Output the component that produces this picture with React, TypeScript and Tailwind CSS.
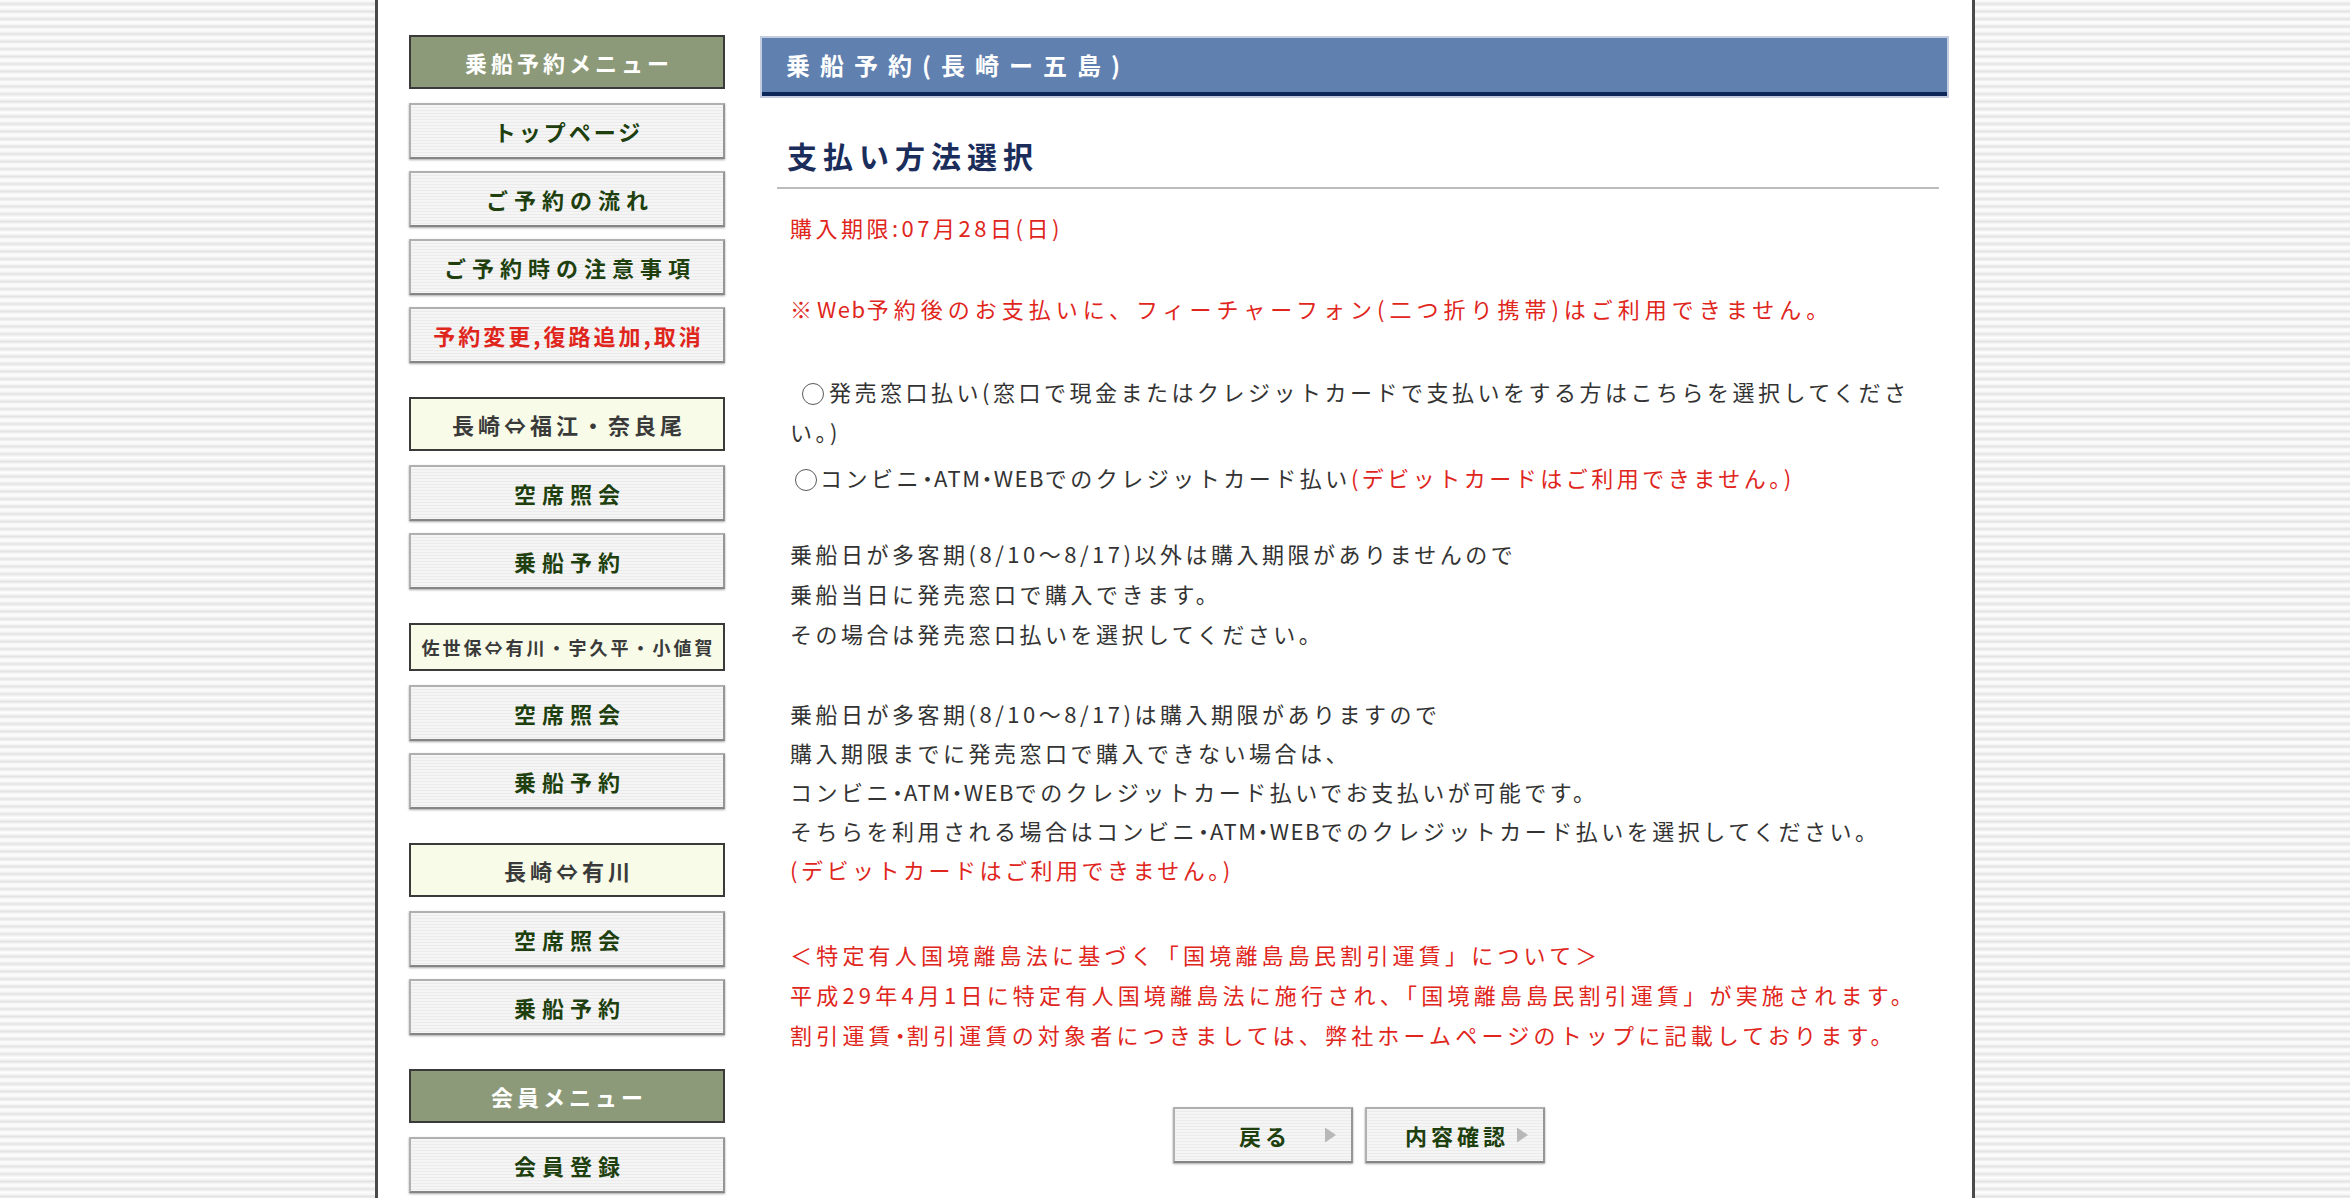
import React from 'react';

const jp = "font-['Noto_Sans_CJK_JP','Noto_Sans',sans-serif]";

const grayBtn =
  'relative flex h-[56px] items-center justify-center border-2 border-[#b0b0b0] border-b-[#858585] border-r-[#969696] bg-[repeating-linear-gradient(to_bottom,#f5f5f5_0px,#f5f5f5_2px,#ebebeb_2px,#ebebeb_3px)] shadow-[0_1px_2px_rgba(0,0,0,0.35)] font-bold text-[#203f0e]';

// half-width nakaguro, like the original page renders it
const Dot = () => <span className="tracking-[1px] [font-feature-settings:'halt']">・</span>;
const Latin = ({ children }: { children: React.ReactNode }) => <span className="tracking-[1.5px]">{children}</span>;

function MenuHead({ label, className = '' }: { label: string; className?: string }) {
  return (
    <div
      className={`flex h-[54px] w-[316px] items-center justify-center border-2 border-[#3a3a3a] bg-[#8d9a79] pl-[4px] text-[22px] font-bold tracking-[4px] text-white ${className}`}
    >
      {label}
    </div>
  );
}

function MenuButton({
  label,
  red,
  tight,
  className = '',
}: {
  label: string;
  red?: boolean;
  tight?: boolean;
  className?: string;
}) {
  let look = 'pl-[6px] tracking-[6px]';
  if (red) look = 'pl-[3px] tracking-[3px] text-[#e0261c]';
  else if (tight) look = 'pl-[3px] tracking-[3px]';
  return <div className={`${grayBtn} w-[316px] text-[22px] ${look} ${className}`}>{label}</div>;
}

function RouteLabel({ label, small, className = '' }: { label: string; small?: boolean; className?: string }) {
  return (
    <div
      className={`flex w-[316px] items-center justify-center border-2 border-[#3a3a3a] bg-[#f7fbe8] font-bold text-[#3a3a3a] ${
        small ? 'h-[48px] pl-[3px] text-[18px] tracking-[3px]' : 'h-[54px] pl-[4px] text-[22px] tracking-[4px]'
      } ${className}`}
    >
      {label}
    </div>
  );
}

function Radio({ className = '' }: { className?: string }) {
  return (
    <span
      className={`inline-block h-[22px] w-[22px] rounded-full border-[1.5px] border-[#5a5a5a] bg-white align-[-4px] ${className}`}
    />
  );
}

function ActionButton({ label }: { label: string }) {
  return (
    <div className={`${grayBtn} w-[180px] pl-[4px] text-[22px] tracking-[4px]`}>
      {label}
      <svg
        className="absolute right-[15px] top-1/2 -translate-y-1/2"
        width="11"
        height="15"
        viewBox="0 0 11 15"
      >
        <path d="M0 0 L11 7.5 L0 15 Z" fill="#b8b8b8" />
      </svg>
    </div>
  );
}

export default function App() {
  return (
    <div
      className={`min-h-screen bg-[repeating-linear-gradient(to_bottom,#fdfdfd_0px,#f5f5f5_2px,#e3e3e3_4px,#f5f5f5_6px,#fdfdfd_7.5px)] ${jp}`}
    >
      <div className="mx-auto flex min-h-screen w-[1600px] border-x-[3px] border-[#4a4a4a] bg-white pl-[31px] pr-[23px] pt-[35px]">
        {/* sidebar */}
        <div className="flex w-[316px] shrink-0 flex-col">
          <MenuHead label="乗船予約メニュー" />
          <MenuButton label="トップページ" tight className="mt-[14px]" />
          <MenuButton label="ご予約の流れ" className="mt-[12px]" />
          <MenuButton label="ご予約時の注意事項" className="mt-[12px]" />
          <MenuButton label="予約変更,復路追加,取消" red className="mt-[12px]" />

          <RouteLabel label="長崎⇔福江・奈良尾" className="mt-[34px]" />
          <MenuButton label="空席照会" className="mt-[14px]" />
          <MenuButton label="乗船予約" className="mt-[12px]" />

          <RouteLabel label="佐世保⇔有川・宇久平・小値賀" small className="mt-[34px]" />
          <MenuButton label="空席照会" className="mt-[14px]" />
          <MenuButton label="乗船予約" className="mt-[12px]" />

          <RouteLabel label="長崎⇔有川" className="mt-[34px]" />
          <MenuButton label="空席照会" className="mt-[14px]" />
          <MenuButton label="乗船予約" className="mt-[12px]" />

          <MenuHead label="会員メニュー" className="mt-[34px]" />
          <MenuButton label="会員登録" className="mt-[14px]" />
        </div>

        {/* main */}
        <div className="ml-[35px] flex-1">
          <div className="mt-[1px] h-[62px] border-2 border-[#c4cce0] bg-[#6080b0]">
            <div className="flex h-full items-center border-b-[4px] border-[#0d2858] pl-[24px] text-[24px] font-bold tracking-[10px] text-white">
              乗船予約(長崎ー五島)
            </div>
          </div>

          <h2 className="ml-[17px] mr-[10px] mt-[35px] border-b-2 border-[#bcbcbc] pb-[9px] pl-[10px] text-[30px] font-bold leading-[45px] tracking-[6px] text-[#1b2d5b]">
            支払い方法選択
          </h2>

          <div className="mt-[18px] whitespace-nowrap pl-[30px] pr-[10px] text-[22px] leading-[40px] tracking-[3.5px] text-[#333]">
            <p className="text-[#e0261c]">購入期限:07月28日(日)</p>

            <p className="mt-[41px] tracking-[5px] text-[#e0261c]">
              ※<Latin>Web</Latin>予約後のお支払いに、フィーチャーフォン(二つ折り携帯)はご利用できません。
            </p>

            <p className="mt-[43px]">
              <Radio className="ml-[12px] mr-[5px]" />
              発売窓口払い(窓口で現金またはクレジットカードで支払いをする方はこちらを選択してくださ
              <br />
              い。)
            </p>
            <p className="mt-[6px]">
              <Radio className="ml-[5px] mr-[3px]" />
              コンビニ<Dot /><Latin>ATM</Latin><Dot /><Latin>WEB</Latin>でのクレジットカード払い
              <span className="text-[#e0261c]">(デビットカードはご利用できません。)</span>
            </p>

            <p className="mt-[36px]">
              乗船日が多客期(8/10〜8/17)以外は購入期限がありませんので
              <br />
              乗船当日に発売窓口で購入できます。
              <br />
              その場合は発売窓口払いを選択してください。
            </p>

            <p className="mt-[41px] leading-[39px]">
              乗船日が多客期(8/10〜8/17)は購入期限がありますので
              <br />
              購入期限までに発売窓口で購入できない場合は、
              <br />
              コンビニ<Dot /><Latin>ATM</Latin><Dot /><Latin>WEB</Latin>でのクレジットカード払いでお支払いが可能です。
              <br />
              そちらを利用される場合はコンビニ<Dot /><Latin>ATM</Latin><Dot /><Latin>WEB</Latin>でのクレジットカード払いを選択してください。
              <br />
              <span className="text-[#e0261c]">(デビットカードはご利用できません。)</span>
            </p>

            <p className="mt-[45px] tracking-[4.2px] text-[#e0261c]">
              ＜特定有人国境離島法に基づく「国境離島島民割引運賃」について＞
              <br />
              平成29年4月1日に特定有人国境離島法に施行され、「国境離島島民割引運賃」が実施されます。
              <br />
              割引運賃<Dot />割引運賃の対象者につきましては、弊社ホームページのトップに記載しております。
            </p>

            <div className="mt-[53px] flex justify-center gap-[12px] pb-[40px] pr-[11px]">
              <ActionButton label="戻る" />
              <ActionButton label="内容確認" />
            </div>
          </div>
        </div>
      </div>
    </div>
  );
}
